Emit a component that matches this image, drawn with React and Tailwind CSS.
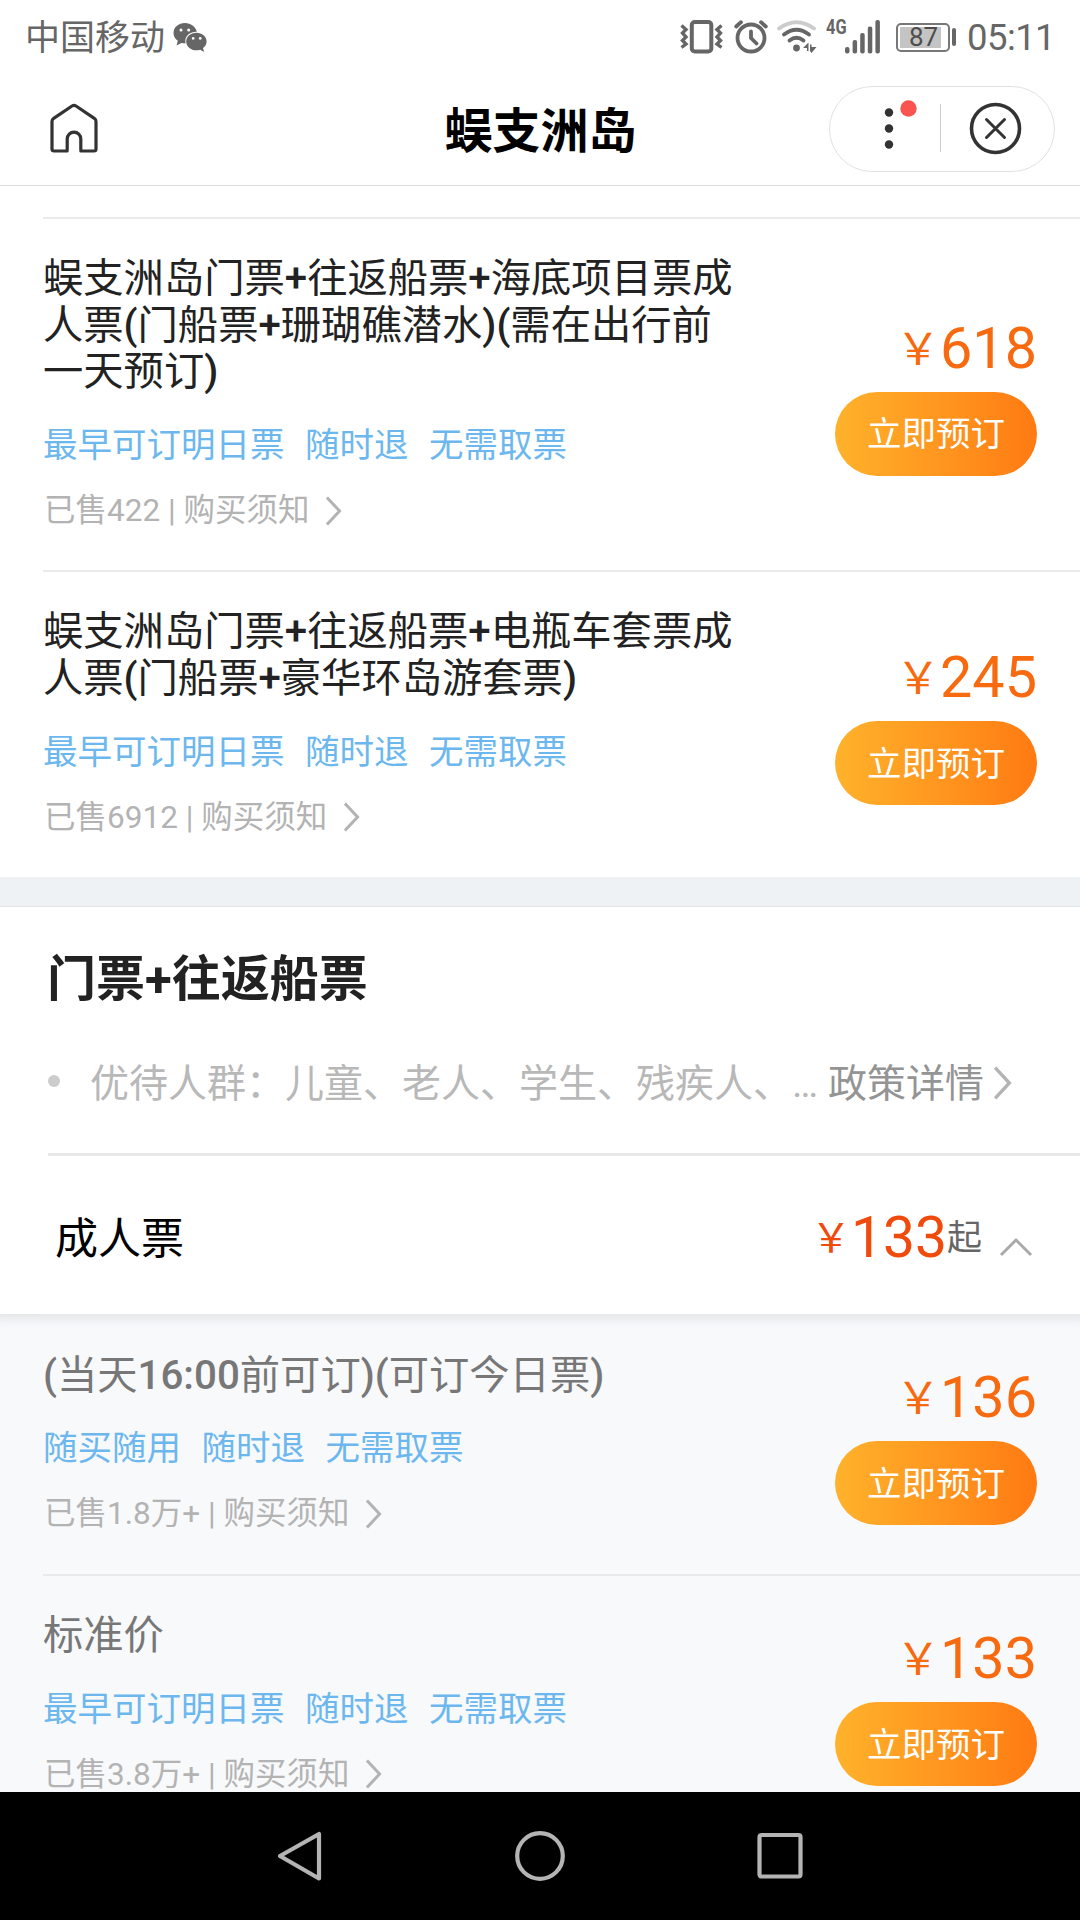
import React from "react";

const tickets = [
  {
    title: "蜈支洲岛门票+往返船票+海底项目票成人票(门船票+珊瑚礁潜水)(需在出行前一天预订)",
    tags: ["最早可订明日票", "随时退", "无需取票"],
    sold: "422",
    price: "618",
  },
  {
    title: "蜈支洲岛门票+往返船票+电瓶车套票成人票(门船票+豪华环岛游套票)",
    tags: ["最早可订明日票", "随时退", "无需取票"],
    sold: "6912",
    price: "245",
  },
];

const adultTickets = [
  {
    title: "(当天16:00前可订)(可订今日票)",
    tags: ["随买随用", "随时退", "无需取票"],
    sold: "1.8万+",
    price: "136",
  },
  {
    title: "标准价",
    tags: ["最早可订明日票", "随时退", "无需取票"],
    sold: "3.8万+",
    price: "133",
  },
];

const WechatIcon = () => (
  <svg className="ml-[8px] h-[30px] w-[34px]" viewBox="0 0 34 30">
    <path
      fill="#666"
      d="M12 1C5.400 1 .5 5.400.5 11c0 3.200 1.700 5.900 4.300 7.800L3.500 23.500l5-2.600c1.100.3 2.200.4 3.500.4h.7A9.500 9.500 0 0 1 12.300 19c0-5.400 5-9.300 11-9.300h.5C22.600 4.600 17.800 1 12 1Z"
    />
    <path
      fill="#666"
      d="M23.400 10.700c-5.700 0-10.200 3.800-10.200 8.700s4.500 8.900 10.200 8.900c1.300 0 2.600-.2 3.700-.6l4 2.200-1.100-3.800c2.200-1.600 3.600-4 3.600-6.700 0-4.900-4.500-8.700-10.200-8.700Z"
    />
    <g fill="#fff">
      <circle cx="8" cy="8" r="1.500" />
      <circle cx="15.700" cy="8" r="1.500" />
      <circle cx="20.200" cy="16.400" r="1.300" />
      <circle cx="27.200" cy="16.400" r="1.300" />
    </g>
  </svg>
);

const VibrateIcon = () => (
  <svg className="h-[34px] w-[43px]" viewBox="0 0 43 34" fill="none" stroke="#666">
    <rect x="11.800" y="2" width="19.500" height="29.500" rx="3" strokeWidth="4" />
    <path
      d="M1.500 5.500 6 9.500 2.500 13 6 17 2.500 20.500 6 24 1.500 27.500M41.500 5.500 37 9.500 40.500 13 37 17 40.500 20.500 37 24 41.500 27.500"
      strokeWidth="3.400"
    />
  </svg>
);

const AlarmIcon = () => (
  <svg
    className="h-[34px] w-[34px]"
    viewBox="0 0 34 34"
    fill="none"
    stroke="#666"
    strokeWidth="3.800"
    strokeLinecap="round"
  >
    <circle cx="17" cy="18" r="13.500" />
    <path d="M2.200 6.500 7 2.200M31.800 6.500 27 2.200M17 11.500v6.500l5.500 5.500" />
  </svg>
);

const WifiIcon = () => (
  <svg className="h-[34px] w-[40px]" viewBox="0 0 40 34" fill="none" strokeLinecap="round">
    <path d="M2 8.500Q19.500-4 37 8.500" stroke="#ccc" strokeWidth="3.800" />
    <path d="M7 14.500Q19.500 5 32 14.500" stroke="#666" strokeWidth="3.800" />
    <path d="M12.500 20.500Q19.500 15 26.500 20.500" stroke="#666" strokeWidth="3.800" />
    <circle cx="19.500" cy="28" r="3.400" fill="#666" />
    <path d="M26 28l5.500-5.500V31H30v-3ZM33 24.500h1.500V27H39.500L34.500 33 33 31Z" fill="#666" />
  </svg>
);

const SignalIcon = () => (
  <svg className="h-[34px] w-[36px]" viewBox="0 0 36 34" fill="#666">
    <rect x="0" y="27" width="4.500" height="6.500" rx="2" />
    <rect x="7.600" y="20" width="4.500" height="13.500" rx="2" />
    <rect x="15.200" y="13" width="4.500" height="20.500" rx="2" />
    <rect x="22.800" y="6.500" width="4.500" height="27" rx="2" />
    <rect x="30.400" y="0" width="4.500" height="33.500" rx="2" />
  </svg>
);

const HomeIcon = () => (
  <svg
    className="mb-[2px] ml-px h-[50px] w-[48px]"
    viewBox="0 0 48 50"
    fill="none"
    stroke="#333"
    strokeWidth="3.200"
    strokeLinejoin="round"
  >
    <path d="M17.200 48H4Q2 48 2 46V18.500Q2 16.500 3.700 15.300L22 3Q24 1.700 26 3L44.300 15.300Q46 16.500 46 18.500V46Q46 48 44 48H30.800V36a6.800 6.800 0 0 0-13.600 0Z" />
    <path d="M18.900 48h10.200" stroke="#fff" strokeWidth="4" />
  </svg>
);

const Chevron = ({ className, stroke = "#b3b3b3" }) => (
  <svg className={className} viewBox="0 0 18 32" fill="none" stroke={stroke} strokeWidth="3.200">
    <path d="M2 1.500 15.500 16 2 30.500" />
  </svg>
);

const StatusBar = () => (
  <div className="flex h-[72px] items-center pt-[2px] pr-[25px] pl-[25px] text-[#666]">
    <span className="pt-[3px] text-[35px] leading-[40px]">中国移动</span>
    <WechatIcon />
    <div className="ml-auto flex items-center">
      <VibrateIcon />
      <span className="w-[11px]" />
      <AlarmIcon />
      <span className="w-[9px]" />
      <WifiIcon />
      <span className="mb-[20px] ml-[9px] w-[19px] origin-left scale-x-[0.820] text-[20px] leading-[16px] font-bold">
        4G
      </span>
      <SignalIcon />
      <div className="ml-[15px] flex h-[29px] w-[54px] rounded-[5px] border-2 border-[#777] p-[2px]">
        <div className="flex w-[41px] items-center justify-center bg-[#c4c4c4] pl-[6px] text-[26px] leading-[24px] text-[#4d4d4d]">
          87
        </div>
      </div>
      <span className="ml-[2px] h-[18px] w-[4px] rounded-[2px] bg-[#666]" />
      <span className="ml-[11px] pt-[2px] text-[36.500px] leading-[40px] tracking-[-0.600px]">05:11</span>
    </div>
  </div>
);

const Header = () => (
  <header className="grid h-[114px] grid-cols-[1fr_auto_1fr] items-center border-b border-[#dedede] pr-[25px] pl-[49px]">
    <HomeIcon />
    <h1 className="pt-[7px] pr-[23px] text-[48px] leading-[56px] font-bold text-black">蜈支洲岛</h1>
    <div className="flex h-[86px] w-[226px] items-center justify-self-end rounded-full border border-[#e2e2e2]">
      <svg className="h-[84px] w-[224px]" viewBox="0 0 224 84" fill="#333">
        <circle cx="59" cy="25.500" r="4.200" />
        <circle cx="59" cy="41.500" r="4.200" />
        <circle cx="59" cy="57.500" r="4.200" />
        <circle cx="78.500" cy="21.500" r="8.200" fill="#fa5450" />
        <path d="M110.500 17v48" stroke="#ccc" />
        <g fill="none" stroke="#333" strokeWidth="3.600" strokeLinecap="round">
          <circle cx="165.500" cy="41.500" r="24" />
          <path d="m156.500 32.500 18 18m0-18-18 18" strokeWidth="3" />
        </g>
      </svg>
    </div>
  </header>
);

// latin characters and digits are set heavier than the chinese text
const Title = ({ text }) =>
  text.split(/([+:()\d]+)/).map((part, i) =>
    i % 2 ? (
      <span key={i} className="font-medium">
        {part}
      </span>
    ) : (
      part
    )
  );

const Ticket = ({ item, muted }) => (
  <div className="ml-[43px] flex items-center justify-between border-t-2 border-[#e9eaeb] pr-[43px]">
    <div className="w-[700px] pt-[37px] pb-[39px]">
      <h3
        className={
          "text-[40.300px] leading-[46.700px] font-normal " + (muted ? "text-[#777]" : "text-[#222]")
        }
      >
        <Title text={item.title} />
      </h3>
      <div className="mt-[26px] flex gap-[20.500px] text-[34.500px] leading-[46px] text-[#6cb8ee]">
        {item.tags.map((tag) => (
          <span key={tag}>{tag}</span>
        ))}
      </div>
      <div className="mt-[23px] flex items-center pl-px text-[31.500px] leading-[40px] text-[#b3b3b3]">
        <span>已售{item.sold} | 购买须知</span>
        <Chevron className="mb-px ml-[15px] h-[30px] w-[19px]" />
      </div>
    </div>
    <div className="flex flex-col items-end">
      <div className="flex items-center pt-px text-[#f76a10]">
        <span className="pt-[2px] text-[44px] leading-[60px]">￥</span>
        <span className="text-[57.500px] leading-[68px]">{item.price}</span>
      </div>
      <button className="mt-[9px] h-[84px] w-[202px] rounded-full bg-linear-to-r from-[#ffb22b] to-[#ff7a12] pt-[3px] text-[34.500px] text-white">
        立即预订
      </button>
    </div>
  </div>
);

const NavBar = () => (
  <nav className="flex h-[128px] shrink-0 items-center justify-center gap-[190px] bg-black">
    <svg className="h-[52px] w-[50px]" viewBox="0 0 50 52" fill="none" stroke="#b4b4b4" strokeWidth="4.200">
      <path d="M44 4v44.500L5 26Z" strokeLinejoin="round" />
    </svg>
    <svg className="h-[52px] w-[50px]" viewBox="0 0 50 52" fill="none" stroke="#b4b4b4" strokeWidth="4.200">
      <circle cx="25" cy="26" r="22.800" />
    </svg>
    <svg className="h-[52px] w-[50px]" viewBox="0 0 50 52" fill="none" stroke="#b4b4b4" strokeWidth="4.200">
      <rect x="4.500" y="5" width="41" height="41.500" rx="2" />
    </svg>
  </nav>
);

const App = () => {
  return (
    <div className="flex h-[1920px] w-[1080px] flex-col overflow-hidden bg-white font-['Roboto','Noto_Sans_CJK_SC',sans-serif]">
      <StatusBar />
      <Header />
      <main className="flex-1 overflow-hidden pt-[31px]">
        {tickets.map((item) => (
          <Ticket key={item.price} item={item} />
        ))}

        <div className="h-[30px] border-b border-[#e2e4e6] bg-[#eff2f5]" />

        <section>
          <h2 className="pt-[45px] pl-[47px] text-[49px] leading-[56px] font-bold text-[#222]">
            门票+往返船票
          </h2>
          <div className="mt-[45px] flex h-[60px] items-center pl-[48px] text-[39px] leading-[60px]">
            <span className="mb-[3px] size-[12px] rounded-full bg-[#ccc]" />
            <span className="ml-[30px] pt-[2px] text-[#b8b8b8]">优待人群：儿童、老人、学生、残疾人、…</span>
            <span className="ml-[10px] pt-[2px] text-[#949494]">政策详情</span>
            <Chevron className="ml-[9px] h-[34px] w-[19px]" />
          </div>
          <div className="mt-[40px] ml-[48px] h-[3px] bg-[#e8e8e8]" />
          <div className="flex h-[160px] items-center pr-[47px] pl-[55px]">
            <span className="pt-[7px] text-[43px] text-black">成人票</span>
            <div className="ml-auto flex items-center text-[#f04a0c]">
              <span className="pt-[6px] text-[40px] leading-[60px]">￥</span>
              <span className="pt-[5px] text-[57px] leading-[68px]">133</span>
              <span className="pt-[7px] text-[35px] leading-[60px] text-[#666]">起</span>
            </div>
            <svg className="mt-[23px] ml-[17px] h-[20px] w-[34px]" viewBox="0 0 34 20" fill="none">
              <path d="M2 18 17 3l15 15" stroke="#aaa" strokeWidth="3" />
            </svg>
          </div>
        </section>

        <section className="bg-[#f8f9fb] shadow-[inset_0_14px_12px_-10px_#dfe1e3]">
          {adultTickets.map((item, i) => (
            <div key={item.price} className={i === 0 ? "-mt-[2px] pb-px" : ""}>
              <Ticket item={item} muted />
            </div>
          ))}
        </section>
      </main>
      <NavBar />
    </div>
  );
};

export default App;
